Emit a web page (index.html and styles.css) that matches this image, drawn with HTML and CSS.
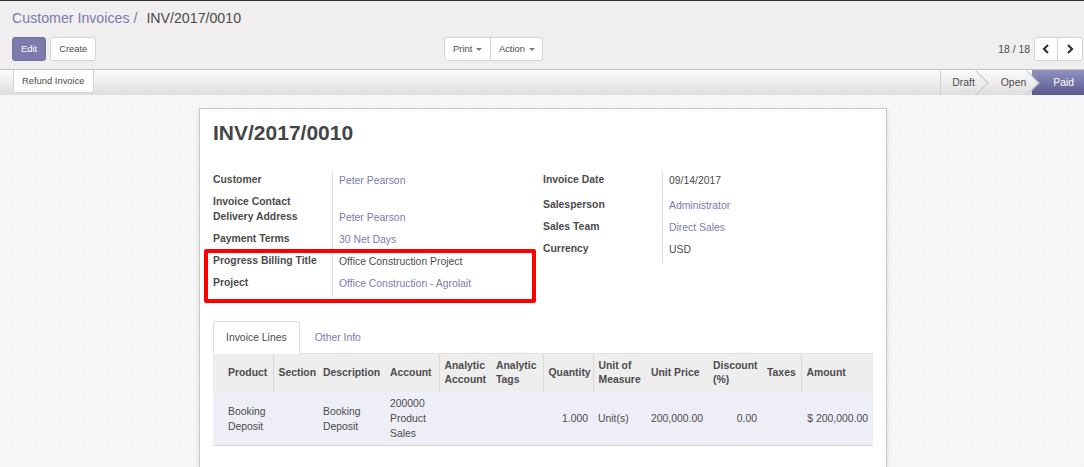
FILE: index.html
```html
<!DOCTYPE html>
<html>
<head>
<meta charset="utf-8">
<title>INV/2017/0010</title>
<link rel="stylesheet" href="styles.css">
</head>
<body>
<div class="topline"></div>
<div class="cp">
  <div class="crumbs"><span class="crumb-link">Customer Invoices /</span><span class="crumb-cur">INV/2017/0010</span></div>
  <div class="cp-row">
    <div class="cp-buttons">
      <button class="btn btn-primary">Edit</button>
      <button class="btn">Create</button>
    </div>
    <div class="sidebar">
      <button class="btn grp-l">Print <span class="caret"></span></button><button class="btn grp-r">Action <span class="caret"></span></button>
    </div>
    <div class="pager">
      <span class="pager-val">18 / 18</span>
      <div class="pager-btns">
        <button class="btn pbtn pbtn-l"><svg width="8" height="10" viewBox="0 0 8 10"><path d="M6 1 L2 5 L6 9" fill="none" stroke="#333" stroke-width="2.2"/></svg></button><button class="btn pbtn"><svg width="8" height="10" viewBox="0 0 8 10"><path d="M2 1 L6 5 L2 9" fill="none" stroke="#333" stroke-width="2.2"/></svg></button>
      </div>
    </div>
  </div>
</div>
<div class="statusbar">
  <button class="btn refund">Refund Invoice</button>
  <div class="steps">
    <span class="step step-first"><span class="step-label">Draft</span></span>
    <span class="step step-mid"><span class="step-label">Open</span></span>
    <span class="step step-active"><span class="step-label">Paid</span></span>
  </div>
</div>
<div class="content">
  <div class="sheet">
    <h1 class="title">INV/2017/0010</h1>
    <div class="groups">
      <div class="group">
        <div class="lbl">Customer</div><div class="val link">Peter Pearson</div>
        <div class="lbl tight">Invoice Contact</div><div class="val tight"></div>
        <div class="lbl">Delivery Address</div><div class="val link">Peter Pearson</div>
        <div class="lbl">Payment Terms</div><div class="val link">30 Net Days</div>
        <div class="lbl">Progress Billing Title</div><div class="val">Office Construction Project</div>
        <div class="lbl">Project</div><div class="val link">Office Construction - Agrolait</div>
      </div>
      <div class="group">
        <div class="lbl tall">Invoice Date</div><div class="val tall">09/14/2017</div>
        <div class="lbl">Salesperson</div><div class="val link">Administrator</div>
        <div class="lbl">Sales Team</div><div class="val link">Direct Sales</div>
        <div class="lbl">Currency</div><div class="val">USD</div>
      </div>
    </div>
    <div class="highlight"></div>
    <div class="notebook">
      <div class="tabs">
        <span class="tab tab-active">Invoice Lines</span>
        <span class="tab">Other Info</span>
      </div>
      <table class="lines">
        <colgroup>
          <col class="w-product"><col class="w-section"><col class="w-desc"><col class="w-account">
          <col class="w-aacc"><col class="w-atags"><col class="w-qty"><col class="w-uom">
          <col class="w-price"><col class="w-disc"><col class="w-taxes"><col class="w-amount">
        </colgroup>
        <thead>
          <tr>
            <th class="first">Product</th>
            <th class="sep">Section</th>
            <th>Description</th>
            <th>Account</th>
            <th class="sep">Analytic Account</th>
            <th>Analytic Tags</th>
            <th class="sep">Quantity</th>
            <th class="sep">Unit of Measure</th>
            <th>Unit Price</th>
            <th>Discount (%)</th>
            <th>Taxes</th>
            <th class="sep">Amount</th>
          </tr>
        </thead>
        <tbody>
          <tr>
            <td class="first">Booking Deposit</td>
            <td></td>
            <td>Booking Deposit</td>
            <td>200000 Product Sales</td>
            <td></td>
            <td></td>
            <td class="num">1.000</td>
            <td>Unit(s)</td>
            <td class="num">200,000.00</td>
            <td class="num">0.00</td>
            <td></td>
            <td class="num">$ 200,000.00</td>
          </tr>
        </tbody>
      </table>
    </div>
  </div>
</div>
</body>
</html>
```
FILE: styles.css
```css
* { box-sizing: border-box; }
html, body { margin: 0; padding: 0; }
body {
  font-family: "Liberation Sans", Arial, sans-serif;
  font-size: 10.4px;
  color: #4c4c4c;
  background-color: #f7f7f7;
  background-image: repeating-conic-gradient(#f5f5f5 0% 25%, #f9f9f9 0% 50%);
  background-size: 3px 3px;
  height: 467px;
  overflow: hidden;
}
button { font-family: inherit; }

.topline { height: 1px; background: #2e2e2e; }

.cp {
  background: #f0eeee;
  border-bottom: 1px solid #c4c4c4;
  height: 69px;
  padding: 7px 1px 0 12px;
}
.crumbs { font-size: 14.2px; line-height: 20px; white-space: nowrap; }
.crumb-link { color: #7c7bad; }
.crumb-cur { color: #4c4c4c; margin-left: 9px; }

.cp-row {
  margin-top: 9px;
  display: grid;
  grid-template-columns: 432px auto 1fr;
  align-items: center;
}
.cp-buttons { display: flex; gap: 4px; }

.btn {
  height: 24px;
  padding: 0 8px;
  font-size: 9.4px;
  color: #4c4c4c;
  background: #fff;
  border: 1px solid #d4d4d4;
  border-radius: 3px;
  line-height: 22px;
  cursor: pointer;
}
.btn-primary { background: #7c7bad; border-color: #7271a3; color: #fff; }

.sidebar { display: flex; }
.grp-l { border-radius: 3px 0 0 3px; }
.grp-r { border-radius: 0 3px 3px 0; border-left: 0; padding-right: 7px; }
.caret {
  display: inline-block;
  width: 0; height: 0;
  border-left: 3px solid transparent;
  border-right: 3px solid transparent;
  border-top: 3px solid #777;
  vertical-align: middle;
  margin-left: 1px;
}

.pager { justify-self: end; display: flex; align-items: center; gap: 4px; }
.pager-val { font-size: 10.4px; }
.pager-btns { display: flex; }
.pbtn { width: 24px; padding: 0; display: flex; align-items: center; justify-content: center; }
.pbtn-l { border-radius: 3px 0 0 3px; }
.pbtn + .pbtn { border-radius: 0 3px 3px 0; border-left: 0; width: 25px; }

.statusbar {
  height: 25px;
  background: linear-gradient(#fcfcfc, #dedede);
  display: flex;
  justify-content: space-between;
  padding-left: 13px;
}
.refund { height: 23px; border-radius: 0 0 3px 3px; border-top: 0; line-height: 22px; }

.steps { display: flex; height: 25px; }
.step {
  position: relative;
  line-height: 25px;
  padding: 0 6px 0 20px;
  color: #4c4c4c;
  font-size: 10.4px;
}
.step-label { position: relative; z-index: 3; }
.step-first { border-left: 1px solid #cfcfcf; padding-left: 11px; }
.step-first::after, .step-mid::after {
  content: "";
  position: absolute;
  top: 4px;
  right: -4px;
  width: 17px;
  height: 17px;
  transform: rotate(45deg);
  border-top: 1px solid #c8c8c8;
  border-right: 1px solid #c8c8c8;
  background: linear-gradient(135deg, #fcfcfc, #dedede);
  z-index: 2;
}
.step-active {
  background: linear-gradient(#9291c2, #5a598c);
  color: #fff;
  padding: 0 10px 0 21px;
}

.content {
  padding: 13px 0 0 2px;
  display: flex;
  justify-content: center;
}
.sheet {
  position: relative;
  flex: none;
  width: 688px;
  height: 400px;
  background: #fff;
  border: 1px solid #c9c9c9;
  box-shadow: 0 2px 5px rgba(0, 0, 0, 0.12);
  padding: 12px 13px 0 13px;
}
.title {
  margin: 0;
  font-size: 21px;
  line-height: 24px;
  font-weight: bold;
  color: #454545;
}

.groups {
  margin-top: 27px;
  display: grid;
  grid-template-columns: 330px 330px;
  align-items: start;
}
.group {
  display: grid;
  grid-template-columns: 119px 1fr;
  line-height: 15px;
}
.lbl { font-weight: bold; padding-bottom: 7px; }
.val {
  border-left: 1px solid #dcdcdc;
  padding: 1px 0 6px 6px;
}
.lbl.tight { padding-bottom: 0; }
.val.tight { padding: 0; }
.lbl.tall { padding-bottom: 10px; }
.val.tall { padding-bottom: 9px; }
.link { color: #7c7bad; }

.highlight {
  position: absolute;
  left: 4px;
  top: 140px;
  width: 332px;
  height: 54px;
  border: 4px solid #ff0000;
  border-radius: 2px;
}

.notebook { margin-top: 24px; }
.tabs { display: flex; gap: 2px; border-bottom: 1px solid #dddddd; }
.tab {
  line-height: 15px;
  padding: 8px 12px;
  border: 1px solid transparent;
  border-radius: 3px 3px 0 0;
  margin-bottom: -1px;
  color: #7c7bad;
}
.tab-active {
  color: #4c4c4c;
  border-color: #dddddd;
  border-bottom-color: #fff;
  background: #fff;
}

.lines {
  width: 660px;
  border-collapse: collapse;
  table-layout: fixed;
}
.w-product { width: 60px; }
.w-section { width: 45px; }
.w-desc { width: 67px; }
.w-account { width: 54px; }
.w-aacc { width: 52px; }
.w-atags { width: 52px; }
.w-qty { width: 50px; }
.w-uom { width: 53px; }
.w-price { width: 62px; }
.w-disc { width: 54px; }
.w-taxes { width: 39px; }
.w-amount { width: 72px; }

.lines th {
  background: #eeeeee;
  height: 38px;
  padding: 0 4px 0 5px;
  text-align: left;
  font-weight: bold;
  line-height: 14.5px;
  vertical-align: middle;
}
.lines th.sep { border-left: 1px solid #dadada; }
.lines th.first, .lines td.first { padding-left: 15px; }
.lines td {
  background: #eeeef6;
  padding: 4px 5px 4px 5px;
  line-height: 15px;
  vertical-align: middle;
  border-bottom: 1px solid #dddddd;
}
.lines td.num { text-align: right; }
```
